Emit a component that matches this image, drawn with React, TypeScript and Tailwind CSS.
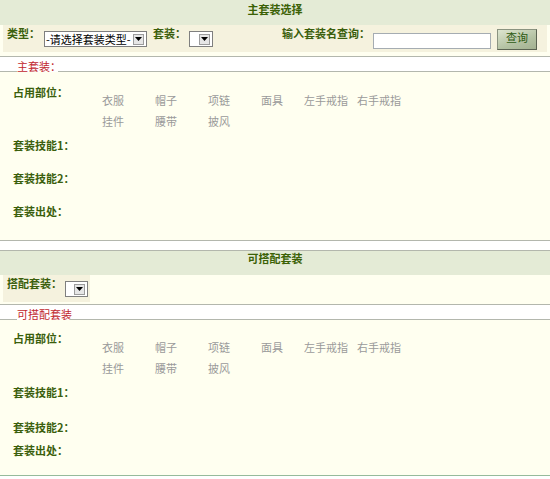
import React from "react";

const parts = [
  "衣服",
  "帽子",
  "项链",
  "面具",
  "左手戒指",
  "右手戒指",
  "挂件",
  "腰带",
  "披风",
];

function FakeSelect({ className, text }: { className: string; text?: string }) {
  return (
    <div className={`flex items-center border border-[#7f7f7f] bg-white ${className}`}>
      {text && (
        <span className="whitespace-nowrap pl-[1px] text-[11px] leading-[13px] text-black">
          {text}
        </span>
      )}
      <span className="mr-[2px] ml-auto flex h-[11px] w-[11px] items-center justify-center border border-[#9c9c9c] bg-[#e6e6e6]">
        <svg width="7" height="4" viewBox="0 0 7 4">
          <path d="M0 0h7L3.5 4z" fill="#000" />
        </svg>
      </span>
    </div>
  );
}

function Legend({ text, width }: { text: string; width: string }) {
  return (
    <div className="flex h-[15px] bg-white">
      <div className="h-[15px] w-[17px] border-b border-[#b3b7ad]" />
      <span className={`mb-[-1px] self-end whitespace-nowrap leading-[13px] text-[#c1272d] ${width}`}>
        {text}
      </span>
      <div className="h-[15px] flex-1 border-b border-[#b3b7ad]" />
    </div>
  );
}

function Label({ children, className = "" }: { children: React.ReactNode; className?: string }) {
  return (
    <div className={`pl-[13px] font-bold leading-[13px] text-[#3b5f0d] ${className}`}>
      {children}
    </div>
  );
}

function Parts({ className }: { className: string }) {
  return (
    <div
      className={`grid grid-cols-[53px_53px_53px_43px_53px_53px] leading-[21px] text-[#9a9a9a] ${className}`}
    >
      {parts.map((p) => (
        <span key={p} className="whitespace-nowrap">
          {p}
        </span>
      ))}
    </div>
  );
}

export default function App() {
  return (
    <div className="h-[479px] w-[550px] bg-white font-['Noto_Sans_CJK_SC',sans-serif] text-[11px]">
      {/* 主套装选择 */}
      <div className="bg-[#fffff0]">
        <div className="h-[25px] bg-[#e4ebd6] pt-[2px] text-center font-bold leading-[14px] text-[#3b6105]">
          主套装选择
        </div>
        <div className="mx-[3px] flex h-[27px] items-start bg-[#f5f2de]">
          <span className="mt-[2px] ml-[4px] font-bold leading-[13px] text-[#3b5f0d]">类型：</span>
          <FakeSelect className="mt-[6px] ml-[4px] h-[16px] w-[103px]" text="-请选择套装类型-" />
          <span className="mt-[2px] ml-[6px] font-bold leading-[13px] text-[#3b5f0d]">套装：</span>
          <FakeSelect className="mt-[6px] ml-[3px] h-[16px] w-[24px]" />
          <span className="mt-[2px] ml-[69px] font-bold leading-[13px] text-[#3b5f0d]">
            输入套装名查询：
          </span>
          <div className="mt-[8px] ml-[3px] h-[16px] w-[118px] border border-[#a5acb2] bg-white" />
          <button
            type="button"
            className="mt-[4px] ml-[6px] flex h-[21px] w-[40px] items-start justify-center border border-[#8a9380] border-r-[#5b6352] border-b-[#5b6352] bg-[linear-gradient(160deg,#dde5d0,#b4c2a3_60%,#a3b191)] pt-[1px] text-[11px] leading-[13px] text-[#2e5a12]"
          >
            查询
          </button>
        </div>
        <div className="h-[4px]" />
        <div className="border-t border-[#b3b7ad]">
          <Legend text="主套装：" width="w-[41px]" />
          <div className="h-[169px] border-b border-[#b3b7ad] bg-[#fffff0]">
            <div className="flex">
              <Label className="w-[102px] pt-[14px]">占用部位：</Label>
              <Parts className="pt-[18px]" />
            </div>
            <Label className="mt-[7px]">套装技能1：</Label>
            <Label className="mt-[20px]">套装技能2：</Label>
            <Label className="mt-[20px]">套装出处：</Label>
          </div>
        </div>
      </div>

      <div className="h-[9px] bg-white" />

      {/* 可搭配套装 */}
      <div className="border-t border-[#b3b7ad] bg-[#fffff0]">
        <div className="h-[24px] bg-[#e4ebd6] text-center font-bold leading-[14px] text-[#3b6105]">
          可搭配套装
        </div>
        <div className="ml-[3px] flex h-[27px] w-[87px] items-start bg-[#f5f2de]">
          <span className="mt-[2px] ml-[4px] font-bold leading-[13px] text-[#3b5f0d]">
            搭配套装：
          </span>
          <FakeSelect className="mt-[6px] ml-[3px] h-[16px] w-[23px]" />
        </div>
        <div className="h-[2px]" />
        <div className="border-t border-[#b3b7ad]">
          <Legend text="可搭配套装" width="w-[53px]" />
          <div className="h-[156px] border-b border-[#96bb9b] bg-[#fffff0]">
            <div className="flex">
              <Label className="w-[102px] pt-[12px]">占用部位：</Label>
              <Parts className="pt-[17px]" />
            </div>
            <Label className="mt-[7px]">套装技能1：</Label>
            <Label className="mt-[22px]">套装技能2：</Label>
            <Label className="mt-[10px]">套装出处：</Label>
          </div>
        </div>
      </div>
    </div>
  );
}
